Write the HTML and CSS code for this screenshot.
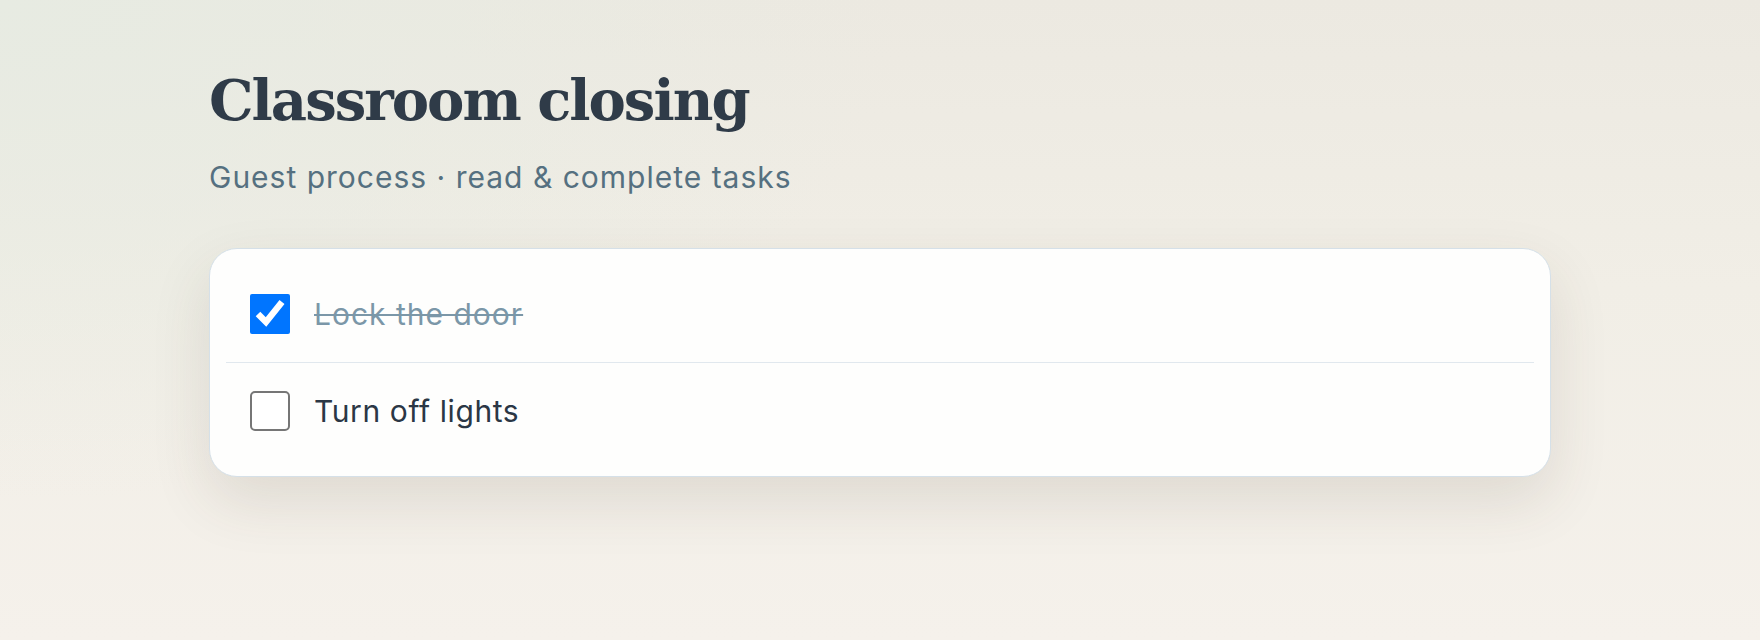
FILE: index.html
```html
<!DOCTYPE html>
<html lang="en">
<head>
<meta charset="utf-8">
<title>Classroom closing</title>
<link rel="stylesheet" href="styles.css">
</head>
<body>
<main class="page">
  <h1 class="title">Classroom closing</h1>
  <p class="subtitle">Guest process · read &amp; complete tasks</p>
  <section class="card">
    <label class="task task-done">
      <input type="checkbox" class="check" checked>
      <span class="task-text">Lock the door</span>
    </label>
    <label class="task">
      <input type="checkbox" class="check">
      <span class="task-text">Turn off lights</span>
    </label>
  </section>
</main>
</body>
</html>
```

FILE: styles.css
```css
html, body {
  margin: 0;
  height: 100%;
}
body {
  background:
    radial-gradient(ellipse 900px 500px at 0% 0%, #e7ebe2 0%, rgba(231,235,226,0) 100%),
    linear-gradient(180deg, #ece9e1 0%, #f1eee6 45%, #f5f1eb 100%);
  font-family: "Inter", "Liberation Sans", sans-serif;
  overflow: hidden;
}
.page {
  padding: 67px 0 0 209px;
  width: 1342px;
}
.title {
  margin: 0;
  font-family: "DejaVu Serif", "Liberation Serif", serif;
  font-weight: 700;
  font-size: 56px;
  line-height: 66px;
  letter-spacing: -2px;
  color: #2f3b48;
}
.subtitle {
  margin: 26px 0 0;
  font-size: 30px;
  line-height: 36px;
  color: #557080;
  letter-spacing: 1px;
}
.card {
  margin-top: 53px;
  box-sizing: border-box;
  width: 1342px;
  padding: 17px 16px;
  background: #fefefd;
  border: 1px solid #d5e0e8;
  border-radius: 28px;
  box-shadow: 0 24px 60px rgba(70, 60, 40, 0.12);
}
.task {
  display: flex;
  align-items: center;
  gap: 24px;
  padding: 28px 24px;
}
.task + .task {
  border-top: 1px solid #e1e8ee;
}
.check {
  width: 40px;
  height: 40px;
  margin: 0;
  flex: none;
}
.check:not(:checked) {
  appearance: none;
  box-sizing: border-box;
  background: #ffffff;
  border: 2px solid #767676;
  border-radius: 5px;
}
.task-text {
  font-size: 30px;
  line-height: 40px;
  color: #2b3745;
  letter-spacing: 0.6px;
}
.task-done .task-text {
  color: #7b97a8;
  text-decoration: line-through;
  text-decoration-thickness: 2px;
  letter-spacing: 1px;
}
```
